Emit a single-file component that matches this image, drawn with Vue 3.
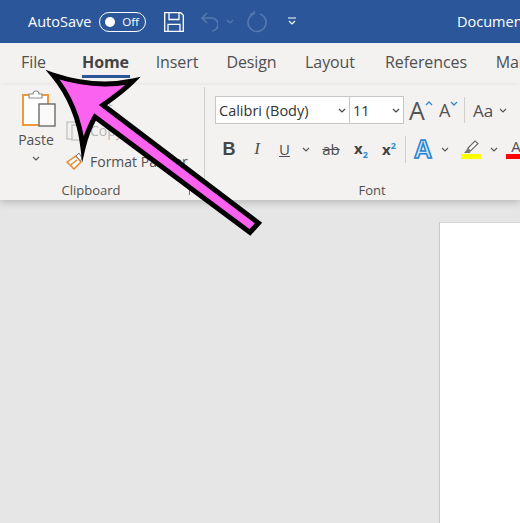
<script setup>
const tabs = [
  { label: 'File', width: 61 },
  { label: 'Home', width: 83, active: true },
  { label: 'Insert', width: 60 },
  { label: 'Design', width: 89 },
  { label: 'Layout', width: 68 },
  { label: 'References', width: 124 },
  { label: 'Mailings', width: 76 },
]
</script>

<template>
  <div class="word">
    <header class="titlebar">
      <span class="autosave">AutoSave</span>
      <span class="toggle"><i class="knob"></i><span>Off</span></span>
      <svg class="save" width="20" height="20" viewBox="0 0 20 20" fill="none" stroke="#fff" stroke-width="1.300">
        <path d="M.7.7h16l2.600 2.600v16H.7z" />
        <path d="M5 .7v6.800h10V.7M4 19.300v-7h12v7" />
      </svg>
      <svg class="undo" width="18" height="20" viewBox="0 0 18 20" fill="none" stroke="#5578ae" stroke-width="1.600">
        <path d="M7 1 2 6l5 5M2 6h9a5.500 5.500 0 0 1 1 13" />
      </svg>
      <svg class="chev-dim" width="8" height="5" viewBox="0 0 8 5" fill="none" stroke="#5578ae" stroke-width="1.200"><path d="m1 1 3 3 3-3" /></svg>
      <svg class="redo" width="20" height="22" viewBox="0 0 20 22" fill="none" stroke="#5578ae" stroke-width="1.600">
        <path d="M13 3a9 9 0 1 1-6 0M7 3V0M7 3H3" />
      </svg>
      <svg class="customize" width="8" height="9" viewBox="0 0 8 9" fill="none" stroke="#fff" stroke-width="1.100"><path d="M0 1h8M1 4l3 3 3-3" /></svg>
      <span class="doc-title">Document1 - Word</span>
    </header>

    <nav class="tabs">
      <span
        v-for="tab in tabs"
        :key="tab.label"
        class="tab"
        :class="{ active: tab.active }"
        :style="{ width: tab.width + 'px' }"
      >{{ tab.label }}</span>
    </nav>

    <section class="ribbon">
      <div class="group clipboard">
        <div class="group-body clip-body">
          <div class="paste">
            <svg class="paste-icon" width="34" height="38" viewBox="0 0 34 38">
              <rect x="1" y="6" width="25" height="30" fill="#fff" stroke="#ed9a3c" stroke-width="2" />
              <path d="M7 9V5h4a3 3 0 0 1 6 0h3v4z" fill="#fff" stroke="#8d8d8d" stroke-width="1.200" />
              <rect x="17" y="15" width="16" height="22" fill="#fafafa" stroke="#6b6b6b" stroke-width="1.400" />
            </svg>
            <span class="paste-label">Paste</span>
            <svg class="chev" width="8" height="5" viewBox="0 0 8 5" fill="none" stroke="#555" stroke-width="1.100"><path d="m1 1 3 3 3-3" /></svg>
          </div>
          <div class="clip-actions">
            <div class="clip-row faded">
              <span class="clip-text">Cut</span>
            </div>
            <div class="clip-row faded">
              <svg class="clip-icon" width="20" height="20" viewBox="0 0 20 20" fill="#f3f2f1" stroke="#bdbdbd" stroke-width="1.200">
                <rect x="1" y="1" width="10" height="17" />
                <rect x="6" y="4" width="10" height="15" />
              </svg>
              <span class="clip-text">Copy</span>
            </div>
            <div class="clip-row">
              <svg class="clip-icon" width="20" height="18" viewBox="0 0 20 18">
                <path d="M1 10 10 4l5 6-7 7z" fill="#fff" stroke="#e8862a" stroke-width="1.500" />
                <path d="M4.500 13 11 8" stroke="#e8862a" stroke-width="1.500" />
                <path d="m10 4 3-3 3 5-1.500 3z" fill="#fff" stroke="#777" stroke-width="1" />
              </svg>
              <span class="clip-text">Format Painter</span>
            </div>
          </div>
        </div>
        <div class="group-label clip-label">Clipboard</div>
        <i class="launcher"></i>
      </div>

      <div class="group font">
        <div class="group-body font-rows">
          <div class="font-row top">
            <div class="combo name"><span>Calibri (Body)</span><svg width="8" height="5" viewBox="0 0 8 5" fill="none" stroke="#444" stroke-width="1.200"><path d="m1 1 3 3 3-3" /></svg></div>
            <div class="combo size"><span>11</span><svg width="8" height="5" viewBox="0 0 8 5" fill="none" stroke="#444" stroke-width="1.200"><path d="m1 1 3 3 3-3" /></svg></div>
            <span class="grow big">A<svg width="8" height="5" viewBox="0 0 8 5" fill="none" stroke="#2e8bd0" stroke-width="1.400"><path d="m1 4 3-3 3 3" /></svg></span>
            <span class="grow small">A<svg width="8" height="5" viewBox="0 0 8 5" fill="none" stroke="#2e8bd0" stroke-width="1.400"><path d="m1 1 3 3 3-3" /></svg></span>
            <i class="sep short"></i>
            <span class="case">Aa</span>
            <svg class="case-chev" width="8" height="5" viewBox="0 0 8 5" fill="none" stroke="#555" stroke-width="1.100"><path d="m1 1 3 3 3-3" /></svg>
            <i class="sep short"></i>
          </div>
          <div class="font-row bottom">
            <span class="fmt bold">B</span>
            <span class="fmt italic">I</span>
            <span class="fmt under">U</span>
            <svg class="fmt-chev" width="8" height="5" viewBox="0 0 8 5" fill="none" stroke="#555" stroke-width="1.100"><path d="m1 1 3 3 3-3" /></svg>
            <span class="fmt strike">ab</span>
            <span class="fmt script">x<sub>2</sub></span>
            <span class="fmt script sup">x<sup>2</sup></span>
            <i class="sep tall"></i>
            <span class="effect">A</span>
            <svg class="fmt-chev effect-chev" width="8" height="5" viewBox="0 0 8 5" fill="none" stroke="#555" stroke-width="1.100"><path d="m1 1 3 3 3-3" /></svg>
            <span class="marker">
              <svg width="18" height="14" viewBox="0 0 18 14" fill="none">
                <path d="M6 8 13 1l3 2.500-7 7H6z" fill="#fff" stroke="#666" stroke-width="1.100" />
                <path d="M2 13 6 8l3 2.500-1 2.500z" fill="#777" />
              </svg>
              <i class="bar yellow"></i>
            </span>
            <svg class="fmt-chev marker-chev" width="8" height="5" viewBox="0 0 8 5" fill="none" stroke="#555" stroke-width="1.100"><path d="m1 1 3 3 3-3" /></svg>
            <span class="marker color">
              <span class="color-a">A</span>
              <i class="bar red"></i>
            </span>
          </div>
        </div>
        <div class="group-label font-label">Font</div>
      </div>
    </section>

    <main class="canvas">
      <div class="page"></div>
    </main>

    <svg class="arrow" width="520" height="523" viewBox="0 0 520 523">
      <path
        d="M53 75Q95 89 133 81Q122 92 103 105L258.500 223L250 232.500L95 117Q87 131 83 148Q78 105 53 75Z"
        fill="#fb62f0"
        stroke="#000"
        stroke-width="5"
        stroke-linejoin="miter"
        stroke-miterlimit="12"
      />
    </svg>
  </div>
</template>

<style>
body {
  margin: 0;
  background: #e6e6e6;
}
</style>

<style scoped>
.word {
  position: relative;
  display: flex;
  flex-direction: column;
  width: 520px;
  height: 523px;
  overflow: hidden;
  font-family: "Open Sans", "Liberation Sans", sans-serif;
  color: #505050;
}

.word svg {
  flex: none;
}

.titlebar {
  display: flex;
  align-items: center;
  flex: none;
  height: 43px;
  padding-left: 28px;
  background: #2b579a;
  color: #fff;
  white-space: nowrap;
}

.autosave {
  flex: none;
  width: 71px;
  font-size: 14.500px;
}

.toggle {
  display: flex;
  align-items: center;
  justify-content: space-between;
  flex: none;
  box-sizing: border-box;
  width: 47px;
  height: 20px;
  padding: 0 6px 0 5px;
  border: 1px solid #fff;
  border-radius: 10px;
  font-size: 11.500px;
}

.knob {
  width: 10px;
  height: 10px;
  border-radius: 50%;
  background: #fff;
}

.save {
  margin-left: 18px;
}

.undo {
  margin-left: 16px;
}

.chev-dim {
  margin-left: 8px;
}

.redo {
  margin-left: 13px;
}

.customize {
  margin-left: 21px;
}

.doc-title {
  flex: none;
  margin-left: 161px;
  font-size: 14.500px;
}

.tabs {
  display: flex;
  flex: none;
  height: 42px;
  padding-left: 3px;
  background: #f3f2f1;
  white-space: nowrap;
}

.tab {
  flex: none;
  box-sizing: border-box;
  padding-top: 8px;
  font-size: 16px;
  line-height: 22px;
  text-align: center;
  letter-spacing: -0.1px;
}

.tab.active {
  position: relative;
  font-weight: 700;
  color: #444;
}

.tab.active::after {
  content: "";
  position: absolute;
  left: 18px;
  right: 17px;
  top: 32px;
  height: 3px;
  background: #2b579a;
}

.ribbon {
  display: flex;
  flex: none;
  height: 115px;
  background: #f3f2f1;
  box-shadow: 0 3px 7px rgba(0, 0, 0, 0.18);
  z-index: 1;
}

.group {
  position: relative;
  flex: none;
  display: flex;
  flex-direction: column;
  box-sizing: border-box;
}

.clipboard {
  width: 205px;
  padding-top: 4px;
}

.clipboard::after {
  content: "";
  position: absolute;
  right: 0;
  top: 2px;
  bottom: 10px;
  width: 1px;
  background: #d2d0ce;
}

.group-body {
  flex: 1;
  min-height: 0;
}

.clip-body {
  display: flex;
}

.paste {
  display: flex;
  flex-direction: column;
  align-items: center;
  flex: none;
  width: 50px;
  margin-left: 11px;
}

.paste-icon {
  margin-left: 5px;
}

.paste-label {
  margin-top: 3px;
  font-size: 14px;
}

.chev {
  margin-top: 7px;
}

.clip-actions {
  display: flex;
  flex-direction: column;
  margin: -4px 0 0 5px;
}

.clip-row {
  display: flex;
  align-items: center;
  flex: none;
  height: 30.500px;
  white-space: nowrap;
}

.clip-row:first-child {
  padding-left: 24px;
}

.clip-icon {
  margin-right: 4px;
}

.clip-text {
  font-size: 14px;
}

.faded {
  color: #b8b8b8;
}

.group-label {
  flex: none;
  height: 20px;
  font-size: 13px;
  line-height: 20px;
  text-align: center;
}

.clip-label {
  padding-right: 23px;
}

.font-label {
  padding-left: 9px;
}

.launcher {
  position: absolute;
  right: 9px;
  bottom: 5px;
  width: 6px;
  height: 6px;
  border-top: 1px solid #777;
  border-left: 1px solid #777;
}

.font {
  width: 315px;
  padding-left: 10px;
}

.font-rows {
  padding-top: 11px;
}

.font-row {
  display: flex;
  align-items: center;
  white-space: nowrap;
}

.font-row.top {
  height: 28px;
}

.font-row.bottom {
  height: 30px;
  margin-top: 10px;
}

.combo {
  display: flex;
  align-items: center;
  justify-content: space-between;
  flex: none;
  box-sizing: border-box;
  height: 28px;
  padding: 0 3px;
  border: 1px solid #c8c6c4;
  background: #fff;
  font-size: 14.500px;
  color: #333;
}

.combo.name {
  width: 135px;
}

.combo.size {
  width: 55px;
  margin-left: -1px;
}

.grow {
  position: relative;
  flex: none;
  color: #555;
  line-height: 1;
}

.grow svg {
  position: absolute;
}

.grow.big {
  width: 30px;
  margin-left: 5px;
  font-size: 25px;
}

.grow.big svg {
  left: 16px;
  top: 3px;
}

.grow.small {
  width: 25px;
  font-size: 18px;
}

.grow.small svg {
  left: 11px;
  top: 0;
}

.sep {
  flex: none;
  width: 1px;
  background: #d2d0ce;
}

.sep.short {
  height: 26px;
}

.case {
  flex: none;
  width: 26px;
  margin-left: 8px;
  font-size: 17px;
}

.case-chev {
  margin-right: 16px;
}

.fmt {
  flex: none;
  font-size: 15px;
  text-align: center;
}

.bold {
  width: 28px;
  font-weight: 700;
  font-size: 18px;
  font-family: "Liberation Sans", sans-serif;
  color: #444;
}

.italic {
  width: 28px;
  font-family: "Liberation Serif", serif;
  font-style: italic;
  font-size: 17px;
}

.under {
  width: 27px;
  text-decoration: underline;
}

.fmt-chev {
  margin-left: 4px;
}

.strike {
  width: 30px;
  margin-left: 6px;
  text-decoration: line-through;
}

.script {
  width: 30px;
  font-weight: 700;
  color: #444;
}

.script.sup {
  width: 26px;
}

.script sub,
.script sup {
  font-size: 9px;
  color: #2e8bd0;
}

.sep.tall {
  height: 27px;
  margin-left: 3px;
}

.effect {
  flex: none;
  width: 20px;
  margin-left: 8px;
  font-family: "Liberation Sans", sans-serif;
  font-size: 25px;
  font-weight: 700;
  color: #cfe6fa;
  -webkit-text-stroke: 1.500px #2683cf;
  line-height: 1;
}

.effect-chev {
  margin-left: 7px;
}

.marker {
  display: flex;
  flex-direction: column;
  align-items: center;
  flex: none;
  width: 20px;
  margin-left: 12px;
}

.bar {
  display: block;
  width: 20px;
  height: 5px;
}

.yellow {
  background: #ffff00;
}

.red {
  background: #ff0000;
}

.marker-chev {
  margin-left: 9px;
}

.marker.color {
  margin-left: 8px;
}

.color-a {
  height: 15px;
  font-size: 15px;
  line-height: 15px;
}

.canvas {
  flex: 1;
  padding: 22px 0 0 439px;
  background: #e6e6e6;
}

.page {
  height: 100%;
  background: #fff;
  border-left: 1px solid #c8c6c4;
  border-top: 1px solid #d8d8d8;
}

.arrow {
  position: absolute;
  left: 0;
  top: 0;
  z-index: 2;
  pointer-events: none;
}
</style>
